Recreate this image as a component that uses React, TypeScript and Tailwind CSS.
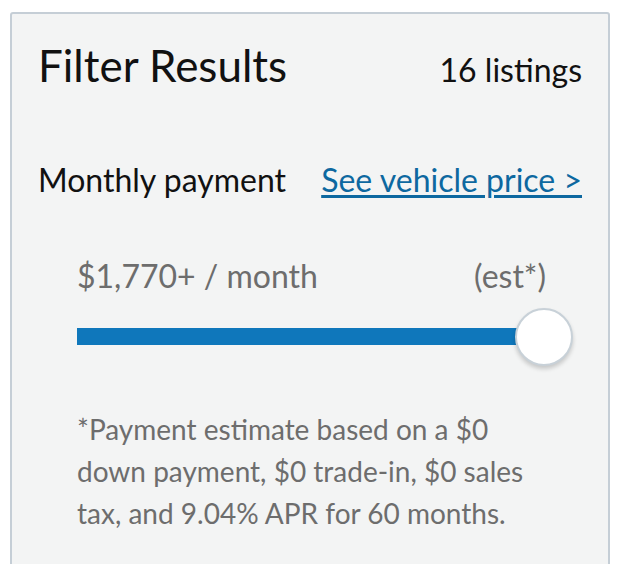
import React from "react";

export default function App() {
  return (
    <div className="h-[564px] w-[628px] overflow-hidden bg-white font-['Lato',sans-serif]">
      <section className="ml-[10px] mt-[12px] h-[600px] w-[600px] rounded-[3px] border-2 border-[#c5ced6] bg-[#f3f4f4] px-[26px] pt-[23px]">
        <div className="flex items-baseline justify-between">
          <h2 className="text-[44px] leading-[56px] text-[#111]">Filter Results</h2>
          <span className="text-[32px] text-[#111]">16 listings</span>
        </div>

        <div className="mt-[66px] flex items-baseline justify-between">
          <span className="text-[32px] leading-[40px] text-[#111]">Monthly payment</span>
          <a href="#" className="text-[32px] leading-[40px] text-[#0d68a0] underline decoration-[3px] underline-offset-[3px]">
            See vehicle price &gt;
          </a>
        </div>

        <div className="ml-[39px] mr-[36px] mt-[56px]">
          <div className="flex items-baseline justify-between text-[32px] leading-[40px] text-[#6d6d6d]">
            <span>$1,770+ / month</span>
            <span>(est*)</span>
          </div>

          <div className="relative mt-[12px] h-[58px]">
            <div className="absolute left-0 right-0 top-[20px] h-[17px] bg-[#0f77bb]" />
            <div className="absolute right-[-27px] top-0 h-[58px] w-[58px] rounded-full border-2 border-[#c8d1d8] bg-white shadow-[0_3px_4px_rgba(0,0,0,0.18)]" />
          </div>

          <p className="mt-[42px] text-[28px] leading-[42px] text-[#6d6d6d]">
            *Payment estimate based on a $0 down payment, $0 trade-in, $0 sales tax, and 9.04% APR for 60 months.
          </p>
        </div>
      </section>
    </div>
  );
}
